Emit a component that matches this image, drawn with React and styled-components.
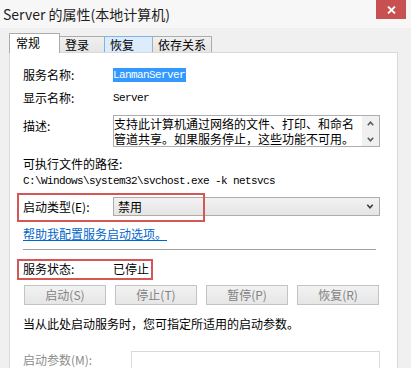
import React from "react";
import styled, { createGlobalStyle } from "styled-components";

const Global = createGlobalStyle`
  html, body { margin: 0; padding: 0; }
  body { font-family: "Noto Sans CJK SC", "Noto Sans", sans-serif; }
`;

const Window = styled.div`
  width: 411px;
  height: 368px;
  overflow: hidden;
  background: #f0f0f0;
  display: flex;
  flex-direction: column;
  color: #000;
`;

const TitleBar = styled.div`
  height: 28px;
  display: flex;
  justify-content: space-between;
  align-items: flex-start;
  background: #f7f7f7;
  flex-shrink: 0;
`;

const Title = styled.div`
  font-size: 14px;
  line-height: 18px;
  padding: 5px 0 0 3px;
  color: #1e1e1e;
  white-space: nowrap;
`;

const CloseButton = styled.div`
  width: 30px;
  height: 19px;
  margin-right: 5px;
  background: #c75050;
  display: flex;
  align-items: center;
  justify-content: center;
`;

const Body = styled.div`
  flex: 1;
  display: flex;
  flex-direction: column;
  padding: 5px 0 0 9px;
`;

const TabStrip = styled.div`
  display: flex;
  align-items: flex-end;
  height: 19px;
  position: relative;
  z-index: 1;
`;

const Tab = styled.div`
  box-sizing: border-box;
  width: ${(p) => p.$w}px;
  height: ${(p) => (p.$active ? 20 : 16)}px;
  margin-bottom: ${(p) => (p.$active ? -1 : 0)}px;
  border: 1px solid ${(p) => (p.$hover ? "#7eb4ea" : "#acacac")};
  border-bottom: none;
  margin-left: ${(p) => (p.$first ? 0 : -1)}px;
  background: ${(p) =>
    p.$active ? "#ffffff" : p.$hover ? "#dcecfc" : "linear-gradient(#f0f0f0, #e5e5e5)"};
  font-size: 12px;
  line-height: ${(p) => (p.$active ? 18 : 15)}px;
  padding-left: ${(p) => (p.$active ? 6 : 5)}px;
  white-space: nowrap;
`;

const Panel = styled.div`
  box-sizing: border-box;
  width: 389px;
  flex: 1;
  background: #fff;
  border: 1px solid #d9d9d9;
  padding: 15px 0 0 13px;
  display: flex;
  flex-direction: column;
`;

const Row = styled.div`
  position: relative;
  display: flex;
  align-items: ${(p) => p.$align || "center"};
  min-height: 14px;
  margin-top: ${(p) => p.$mt || 0}px;
  font-size: 12px;
  line-height: 14px;
  white-space: nowrap;
`;

const Label = styled.div`
  width: ${(p) => p.$w || 90}px;
  flex-shrink: 0;
  color: ${(p) => (p.$disabled ? "#8d8d8d" : "#000")};
  padding-top: ${(p) => p.$pt || 0}px;
`;

const Mono = styled.span`
  font-family: "Liberation Mono", "DejaVu Sans Mono", monospace;
  font-size: 11px;
  letter-spacing: -0.6px;
  line-height: 14px;
  ${(p) => p.$selected && "background: #3399ff; color: #fff; padding: 0 1px 0 0;"}
`;

const DescBox = styled.div`
  box-sizing: border-box;
  width: 267px;
  height: 32px;
  border: 1px solid #abadb3;
  display: flex;
  overflow: hidden;
`;

const DescText = styled.div`
  flex: 1;
  font-size: 12px;
  line-height: 15px;
  overflow: hidden;
`;

const DescLine = styled.div`
  white-space: nowrap;
  height: 15px;
`;

const ScrollBar = styled.div`
  width: 17px;
  background: #f0f0f0;
  display: flex;
  flex-direction: column;
  justify-content: space-between;
  align-items: center;
  padding: 5px 0 4px;
`;

const PathText = styled(Mono)`
  display: block;
`;

const Select = styled.div`
  box-sizing: border-box;
  width: 267px;
  height: 19px;
  border: 1px solid #acacac;
  background: linear-gradient(#f2f2f2, #e5e5e5);
  display: flex;
  align-items: center;
  justify-content: space-between;
  padding: 0 5px 0 4px;
  font-size: 12px;
`;

const Highlight = styled.div`
  position: absolute;
  left: -6px;
  top: ${(p) => p.$top}px;
  bottom: ${(p) => p.$bottom}px;
  width: ${(p) => p.$w}px;
  border: 2px solid #d65555;
  box-sizing: border-box;
  pointer-events: none;
`;

const Link = styled.a`
  color: #0066cc;
  text-decoration: underline;
  font-size: 12px;
  line-height: 14px;
  margin-top: 11px;
  cursor: pointer;
`;

const Separator = styled.div`
  width: 353px;
  height: 1px;
  background: #a0a0a0;
  margin-top: 8px;
`;

const ButtonRow = styled.div`
  display: grid;
  grid-template-columns: repeat(4, 82px);
  column-gap: 9px;
  margin: 9px 0 0 1px;
`;

const Button = styled.div`
  box-sizing: border-box;
  height: 20px;
  border: 1px solid #c3c3c3;
  background: linear-gradient(#f2f2f2, #e6e6e6);
  color: #838383;
  font-size: 12px;
  line-height: 18px;
  text-align: center;
`;

const Note = styled.div`
  font-size: 12px;
  line-height: 14px;
  margin-top: 12px;
  white-space: nowrap;
`;

const Input = styled.div`
  box-sizing: border-box;
  width: 249px;
  height: 24px;
  border: 1px solid #d9d9d9;
  background: #fff;
`;

const Chevron = ({ up, color = "#5a5a5a", w = 7 }) => (
  <svg width={w} height="5" viewBox="0 0 7 5">
    <polyline
      points={up ? "0.8,4.2 3.5,1.2 6.2,4.2" : "0.8,0.8 3.5,3.8 6.2,0.8"}
      fill="none"
      stroke={color}
      strokeWidth="1.6"
    />
  </svg>
);

export default function App() {
  return (
    <>
      <Global />
      <Window>
        <TitleBar>
          <Title>Server 的属性(本地计算机)</Title>
          <CloseButton>
            <svg width="9" height="8" viewBox="0 0 9 8">
              <path d="M1 0.5 L8 7.5 M8 0.5 L1 7.5" stroke="#fff" strokeWidth="1.8" />
            </svg>
          </CloseButton>
        </TitleBar>
        <Body>
          <TabStrip>
            <Tab $active $first $w={51}>常规</Tab>
            <Tab $w={46}>登录</Tab>
            <Tab $hover $w={49}>恢复</Tab>
            <Tab $w={60}>依存关系</Tab>
          </TabStrip>
          <Panel>
            <Row>
              <Label>服务名称:</Label>
              <Mono $selected>LanmanServer</Mono>
            </Row>
            <Row $mt={9}>
              <Label>显示名称:</Label>
              <Mono>Server</Mono>
            </Row>
            <Row $mt={10} $align="flex-start">
              <Label $pt={4}>描述:</Label>
              <DescBox>
                <DescText>
                  <DescLine>支持此计算机通过网络的文件、打印、和命名</DescLine>
                  <DescLine>管道共享。如果服务停止，这些功能不可用。</DescLine>
                </DescText>
                <ScrollBar>
                  <Chevron up />
                  <Chevron />
                </ScrollBar>
              </DescBox>
            </Row>
            <Row $mt={10}>
              <Label $w={200}>可执行文件的路径:</Label>
            </Row>
            <Row $mt={3}>
              <PathText>C:\Windows\system32\svchost.exe -k netsvcs</PathText>
            </Row>
            <Row $mt={9}>
              <Label>启动类型(E):</Label>
              <Select>
                <span>禁用</span>
                <Chevron color="#3c3c3c" w={8} />
              </Select>
              <Highlight $top={-4} $bottom={-6} $w={188} />
            </Row>
            <Link>帮助我配置服务启动选项。</Link>
            <Separator />
            <Row $mt={12}>
              <Label>服务状态:</Label>
              <span>已停止</span>
              <Highlight $top={-3} $bottom={-4} $w={136} />
            </Row>
            <ButtonRow>
              <Button>启动(S)</Button>
              <Button>停止(T)</Button>
              <Button>暂停(P)</Button>
              <Button>恢复(R)</Button>
            </ButtonRow>
            <Note>当从此处启动服务时，您可指定所适用的启动参数。</Note>
            <Row $mt={20} $align="flex-start">
              <Label $w={108} $disabled $pt={2}>启动参数(M):</Label>
              <Input />
            </Row>
          </Panel>
        </Body>
      </Window>
    </>
  );
}
